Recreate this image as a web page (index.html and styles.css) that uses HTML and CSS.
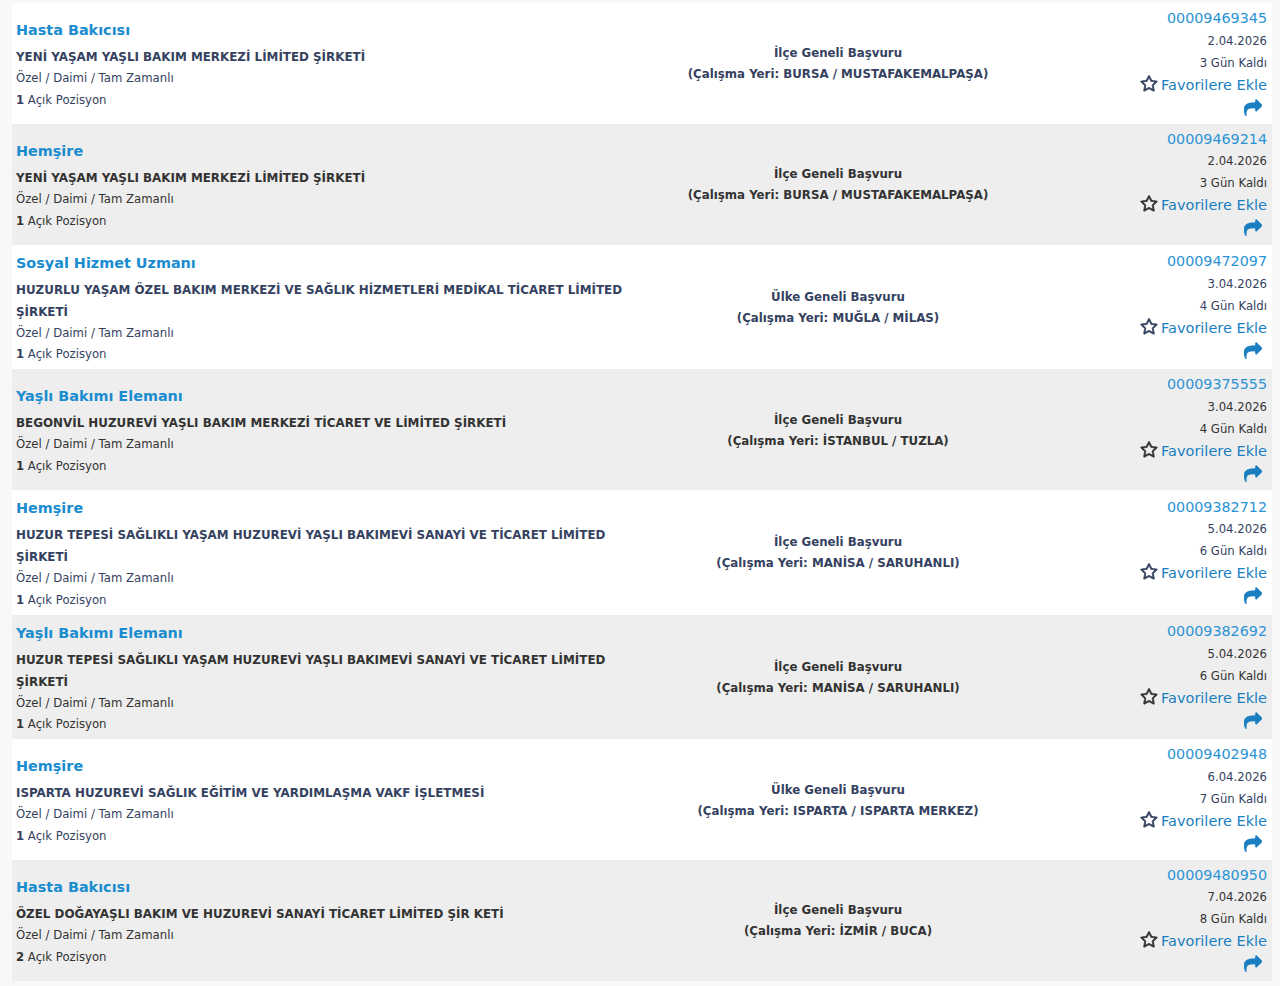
FILE: index.html
```html
<!DOCTYPE html>
<html lang="tr">
<head>
    <meta charset="UTF-8">
    <meta name="viewport" content="width=device-width, initial-scale=1.0">
    <title>İş İlanları</title>
    <link rel="stylesheet" href="styles.css">
</head>
<body>
    <svg class="icon-defs" xmlns="http://www.w3.org/2000/svg">
        <symbol id="icon-star" viewBox="0 0 1792 1792">
            <path d="M1201 1004l306-297-422-62-189-382-189 382-422 62 306 297-73 421 378-199 377 199zm527-357q0 22-26 48l-363 354 86 500q1 7 1 20 0 50-41 50-19 0-40-12l-449-236-449 236q-22 12-40 12-21 0-31.5-14.5t-10.5-35.5q0-6 2-20l86-500-364-354q-25-27-25-48 0-37 56-46l502-73 225-455q19-41 49-41t49 41l225 455 502 73q56 9 56 46z"/>
        </symbol>
        <symbol id="icon-share" viewBox="0 0 1792 1792">
            <path d="M1792 640q0 26-19 45l-512 512q-19 19-45 19t-45-19-19-45v-256h-224q-98 0-175.5 6t-154 21.5-133 42.5-105.5 69.5-80 101-48.5 138.5-17.5 181q0 55 5 123 0 6 2.5 23.5t2.5 26.5q0 15-8.5 25t-23.5 10q-16 0-28-17-7-9-13-22t-13.5-30-10.5-24q-127-285-127-451 0-199 53-333 162-403 875-403h224v-256q0-26 19-45t45-19 45 19l512 512q19 19 19 45z"/>
        </symbol>
    </svg>

    <div class="list">
        <div class="row">
            <div class="col-job">
                <a class="job-title">Hasta Bakıcısı</a>
                <div class="company">YENİ YAŞAM YAŞLI BAKIM MERKEZİ LİMİTED ŞİRKETİ</div>
                <div class="info">Özel / Daimi / Tam Zamanlı</div>
                <div class="info"><strong>1</strong> Açık Pozisyon</div>
            </div>
            <div class="col-place">
                <div>İlçe Geneli Başvuru</div>
                <div>(Çalışma Yeri: BURSA / MUSTAFAKEMALPAŞA)</div>
            </div>
            <div class="col-meta">
                <a class="job-no">00009469345</a>
                <div class="meta-line">2.04.2026</div>
                <div class="meta-line">3 Gün Kaldı</div>
                <a class="fav"><svg class="star"><use href="#icon-star"/></svg> Favorilere Ekle</a>
                <a class="share"><svg class="share-icon"><use href="#icon-share"/></svg></a>
            </div>
        </div>

        <div class="row">
            <div class="col-job">
                <a class="job-title">Hemşire</a>
                <div class="company">YENİ YAŞAM YAŞLI BAKIM MERKEZİ LİMİTED ŞİRKETİ</div>
                <div class="info">Özel / Daimi / Tam Zamanlı</div>
                <div class="info"><strong>1</strong> Açık Pozisyon</div>
            </div>
            <div class="col-place">
                <div>İlçe Geneli Başvuru</div>
                <div>(Çalışma Yeri: BURSA / MUSTAFAKEMALPAŞA)</div>
            </div>
            <div class="col-meta">
                <a class="job-no">00009469214</a>
                <div class="meta-line">2.04.2026</div>
                <div class="meta-line">3 Gün Kaldı</div>
                <a class="fav"><svg class="star"><use href="#icon-star"/></svg> Favorilere Ekle</a>
                <a class="share"><svg class="share-icon"><use href="#icon-share"/></svg></a>
            </div>
        </div>

        <div class="row">
            <div class="col-job">
                <a class="job-title">Sosyal Hizmet Uzmanı</a>
                <div class="company">HUZURLU YAŞAM ÖZEL BAKIM MERKEZİ VE SAĞLIK HİZMETLERİ MEDİKAL TİCARET LİMİTED ŞİRKETİ</div>
                <div class="info">Özel / Daimi / Tam Zamanlı</div>
                <div class="info"><strong>1</strong> Açık Pozisyon</div>
            </div>
            <div class="col-place">
                <div>Ülke Geneli Başvuru</div>
                <div>(Çalışma Yeri: MUĞLA / MİLAS)</div>
            </div>
            <div class="col-meta">
                <a class="job-no">00009472097</a>
                <div class="meta-line">3.04.2026</div>
                <div class="meta-line">4 Gün Kaldı</div>
                <a class="fav"><svg class="star"><use href="#icon-star"/></svg> Favorilere Ekle</a>
                <a class="share"><svg class="share-icon"><use href="#icon-share"/></svg></a>
            </div>
        </div>

        <div class="row">
            <div class="col-job">
                <a class="job-title">Yaşlı Bakımı Elemanı</a>
                <div class="company">BEGONVİL HUZUREVİ YAŞLI BAKIM MERKEZİ TİCARET VE LİMİTED ŞİRKETİ</div>
                <div class="info">Özel / Daimi / Tam Zamanlı</div>
                <div class="info"><strong>1</strong> Açık Pozisyon</div>
            </div>
            <div class="col-place">
                <div>İlçe Geneli Başvuru</div>
                <div>(Çalışma Yeri: İSTANBUL / TUZLA)</div>
            </div>
            <div class="col-meta">
                <a class="job-no">00009375555</a>
                <div class="meta-line">3.04.2026</div>
                <div class="meta-line">4 Gün Kaldı</div>
                <a class="fav"><svg class="star"><use href="#icon-star"/></svg> Favorilere Ekle</a>
                <a class="share"><svg class="share-icon"><use href="#icon-share"/></svg></a>
            </div>
        </div>

        <div class="row">
            <div class="col-job">
                <a class="job-title">Hemşire</a>
                <div class="company">HUZUR TEPESİ SAĞLIKLI YAŞAM HUZUREVİ YAŞLI BAKIMEVİ SANAYİ VE TİCARET LİMİTED ŞİRKETİ</div>
                <div class="info">Özel / Daimi / Tam Zamanlı</div>
                <div class="info"><strong>1</strong> Açık Pozisyon</div>
            </div>
            <div class="col-place">
                <div>İlçe Geneli Başvuru</div>
                <div>(Çalışma Yeri: MANİSA / SARUHANLI)</div>
            </div>
            <div class="col-meta">
                <a class="job-no">00009382712</a>
                <div class="meta-line">5.04.2026</div>
                <div class="meta-line">6 Gün Kaldı</div>
                <a class="fav"><svg class="star"><use href="#icon-star"/></svg> Favorilere Ekle</a>
                <a class="share"><svg class="share-icon"><use href="#icon-share"/></svg></a>
            </div>
        </div>

        <div class="row">
            <div class="col-job">
                <a class="job-title">Yaşlı Bakımı Elemanı</a>
                <div class="company">HUZUR TEPESİ SAĞLIKLI YAŞAM HUZUREVİ YAŞLI BAKIMEVİ SANAYİ VE TİCARET LİMİTED ŞİRKETİ</div>
                <div class="info">Özel / Daimi / Tam Zamanlı</div>
                <div class="info"><strong>1</strong> Açık Pozisyon</div>
            </div>
            <div class="col-place">
                <div>İlçe Geneli Başvuru</div>
                <div>(Çalışma Yeri: MANİSA / SARUHANLI)</div>
            </div>
            <div class="col-meta">
                <a class="job-no">00009382692</a>
                <div class="meta-line">5.04.2026</div>
                <div class="meta-line">6 Gün Kaldı</div>
                <a class="fav"><svg class="star"><use href="#icon-star"/></svg> Favorilere Ekle</a>
                <a class="share"><svg class="share-icon"><use href="#icon-share"/></svg></a>
            </div>
        </div>

        <div class="row">
            <div class="col-job">
                <a class="job-title">Hemşire</a>
                <div class="company">ISPARTA HUZUREVİ SAĞLIK EĞİTİM VE YARDIMLAŞMA VAKF İŞLETMESİ</div>
                <div class="info">Özel / Daimi / Tam Zamanlı</div>
                <div class="info"><strong>1</strong> Açık Pozisyon</div>
            </div>
            <div class="col-place">
                <div>Ülke Geneli Başvuru</div>
                <div>(Çalışma Yeri: ISPARTA / ISPARTA MERKEZ)</div>
            </div>
            <div class="col-meta">
                <a class="job-no">00009402948</a>
                <div class="meta-line">6.04.2026</div>
                <div class="meta-line">7 Gün Kaldı</div>
                <a class="fav"><svg class="star"><use href="#icon-star"/></svg> Favorilere Ekle</a>
                <a class="share"><svg class="share-icon"><use href="#icon-share"/></svg></a>
            </div>
        </div>

        <div class="row">
            <div class="col-job">
                <a class="job-title">Hasta Bakıcısı</a>
                <div class="company">ÖZEL DOĞAYAŞLI BAKIM VE HUZUREVİ SANAYİ TİCARET LİMİTED ŞİR KETİ</div>
                <div class="info">Özel / Daimi / Tam Zamanlı</div>
                <div class="info"><strong>2</strong> Açık Pozisyon</div>
            </div>
            <div class="col-place">
                <div>İlçe Geneli Başvuru</div>
                <div>(Çalışma Yeri: İZMİR / BUCA)</div>
            </div>
            <div class="col-meta">
                <a class="job-no">00009480950</a>
                <div class="meta-line">7.04.2026</div>
                <div class="meta-line">8 Gün Kaldı</div>
                <a class="fav"><svg class="star"><use href="#icon-star"/></svg> Favorilere Ekle</a>
                <a class="share"><svg class="share-icon"><use href="#icon-share"/></svg></a>
            </div>
        </div>
    </div>
</body>
</html>
```

FILE: styles.css
```css
* { margin: 0; padding: 0; box-sizing: border-box; }
body {
    font-family: "DejaVu Sans", Verdana, sans-serif;
    font-size: 11px;
    background: #f8f8f8;
    color: #333;
    height: 986px;
    overflow: hidden;
}
.icon-defs { display: none; }
.list {
    margin: 3px 8px 0 12px;
}
.row {
    display: grid;
    grid-template-columns: 626px 392px 233px;
    align-items: center;
    padding: 5px 5px 5px 4px;
    background: #fff;
    color: #35425f;
}
.row:nth-child(even) {
    background: #eeeeee;
    color: #333;
}
.col-job {
    margin-bottom: -2px;
}
.job-title {
    display: block;
    font-size: 14.4px;
    font-weight: bold;
    line-height: 27px;
    margin-bottom: 2px;
    color: #1a8cd0;
}
.company {
    font-size: 11.9px;
    font-weight: bold;
    line-height: 22px;
    padding-right: 8px;
}
.info {
    font-size: 11.7px;
    line-height: 21.8px;
}
.col-place {
    font-size: 11.8px;
    font-weight: bold;
    text-align: center;
    line-height: 21px;
    padding-top: 2px;
}
.col-meta {
    text-align: right;
}
.job-no {
    display: block;
    font-size: 14.3px;
    line-height: 21.5px;
    color: #2a93d5;
}
.meta-line {
    font-size: 11.7px;
    line-height: 22px;
}
.fav {
    display: block;
    font-size: 14.5px;
    line-height: 23px;
    color: #1a7fc0;
}
.star {
    width: 18px;
    height: 18px;
    margin-right: -2px;
    fill: currentColor;
    color: #35425f;
    stroke: currentColor;
    stroke-width: 70;
    vertical-align: -3px;
}
.row:nth-child(even) .star {
    color: #333;
}
.share {
    display: block;
    height: 22.3px;
}
.share-icon {
    width: 18px;
    height: 18px;
    margin: 2px 5px 0 0;
    fill: #1a7fc0;
    stroke: #1a7fc0;
    stroke-width: 80;
    vertical-align: top;
}
```
